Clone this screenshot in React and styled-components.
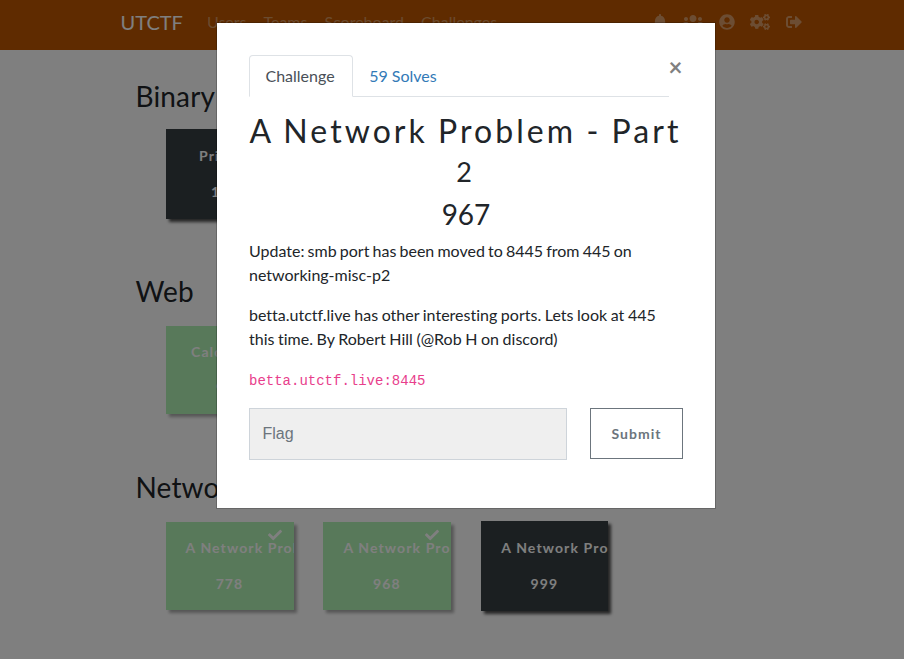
import React from "react";
import styled, { createGlobalStyle } from "styled-components";
import { FaBell, FaUsers, FaUserCircle, FaCogs, FaSignOutAlt, FaCheck } from "react-icons/fa";

const GlobalStyle = createGlobalStyle`
  *, *::before, *::after { box-sizing: border-box; }
  html, body { margin: 0; height: 659px; overflow: hidden; background: #fff; }
  body {
    font-family: Lato, sans-serif;
    font-size: 16px;
    line-height: 1.5;
    font-variant-ligatures: none;
    color: #212529;
  }
`;

const Page = styled.div`
  height: 659px;
  overflow: hidden;
`;

const Navbar = styled.nav`
  height: 50px;
  padding: 0 102px 6px 120.5px;
  display: flex;
  align-items: center;
  background: #bf5700;
`;

const Brand = styled.a`
  width: 78px;
  font-size: 20px;
  line-height: 30px;
  color: #fff;
`;

const NavLinks = styled.div`
  display: flex;
  gap: 17px;
  padding-left: 8.5px;
  flex: 1;
`;

const NavLink = styled.a`
  color: rgba(255, 255, 255, 0.38);
`;

const NavIcons = styled.div`
  display: flex;
  align-items: center;
  gap: 15.7px;
  color: #fff;
  opacity: 0.4;
`;

const IconSlot = styled.span`
  width: ${(p) => p.$w}px;
  flex: none;
  svg { display: block; height: 16px; width: ${(p) => p.$w}px; }
`;

const Board = styled.main`
  padding: 27px 135.5px 0;
`;

const Category = styled.section`
  height: ${(p) => p.$h}px;
`;

const CategoryTitle = styled.h3`
  margin: 0;
  font-size: 28px;
  font-weight: 400;
  line-height: 39px;
  letter-spacing: 0.15px;
  white-space: nowrap;
`;

const CardRow = styled.div`
  display: grid;
  grid-template-columns: repeat(3, 127.6px);
  grid-auto-rows: 90px;
  gap: 29.8px;
  align-items: center;
  padding: ${(p) => p.$top}px 0 0 30.5px;
`;

const Card = styled.button`
  position: relative;
  display: flex;
  flex-direction: column;
  justify-content: flex-start;
  align-items: flex-start;
  height: ${(p) => (p.$solved ? 88 : 90)}px;
  margin: 0;
  border: 0;
  padding: ${(p) => (p.$solved ? 14 : 15)}px 0 0 ${(p) => p.$inset}px;
  overflow: hidden;
  text-align: left;
  white-space: nowrap;
  color: #fff;
  background: ${(p) => (p.$solved ? "#b0f3b4" : "#363e43")};
  box-shadow: 3px 3px 3px ${(p) => (p.$solved ? "rgba(0,0,0,.32)" : "rgba(0,0,0,.7)")};
  font: 700 14px/24px Lato, sans-serif;
  letter-spacing: 1.12px;
`;

const CardName = styled.div`
  flex: none;
`;

const CardPoints = styled.div`
  flex: none;
  width: 127px;
  margin: 12px 0 0 ${(p) => -p.$inset}px;
  text-align: center;
`;

const SolvedMark = styled(FaCheck)`
  position: absolute;
  top: 5.5px;
  right: 11.5px;
  width: 14px;
  height: 14px;
`;

const Backdrop = styled.div`
  position: fixed;
  inset: 0;
  display: flex;
  align-items: flex-start;
  padding: 22px 0 0 216px;
  background: rgba(0, 0, 0, 0.5);
`;

const Modal = styled.div`
  width: 500px;
  height: 487px;
  flex: none;
  padding: 32px 32px 0;
  background: #fff;
  background-clip: padding-box;
  border: 1px solid rgba(0, 0, 0, 0.2);
`;

const ModalTop = styled.div`
  display: flex;
  align-items: flex-start;
`;

const Tabs = styled.div`
  width: 420px;
  height: 42px;
  display: flex;
  border-bottom: 1px solid #dee2e6;
`;

const Tab = styled.div`
  height: 42px;
  padding: 8px ${(p) => (p.$active ? "17px 8px 15.5px" : "16px")};
  border: 1px solid ${(p) => (p.$active ? "#dee2e6" : "transparent")};
  ${(p) => p.$active && "border-bottom-color: #fff; padding: 8px 17px 8px 15.5px;"}
  ${(p) => !p.$active && "padding: 8px 16px 8px 15.5px;"}
  border-radius: 4px 4px 0 0;
  color: ${(p) => (p.$active ? "#495057" : "#337ab7")};
`;

const Close = styled.button`
  margin: 0 0 0 -0.5px;
  padding: 0;
  border: 0;
  background: none;
  font: 700 24px/24px Lato, sans-serif;
  color: #808080;
`;

const Title = styled.h2`
  margin: 13.5px 0 0 -1px;
  font-size: 32px;
  font-weight: 400;
  line-height: 39px;
  letter-spacing: 3.05px;
  word-spacing: -1px;
  text-align: center;
`;

const PartNumber = styled.span`
  font-size: 27px;
  line-height: 1px;
`;

const Value = styled.h3`
  margin: 5px 0 4.5px;
  font-size: 28px;
  font-weight: 400;
  line-height: 41px;
  text-align: center;
`;

const Paragraph = styled.p`
  margin: 0 0 16px;
  line-height: 24px;
  word-spacing: ${(p) => p.$space}px;
`;

const Host = styled.code`
  display: block;
  margin-top: 18px;
  font: 14px/24px "Liberation Mono", monospace;
  color: #e83e8c;
`;

const AnswerRow = styled.div`
  display: flex;
  gap: 23px;
  margin-top: 15px;
`;

const FlagInput = styled.input`
  flex: none;
  width: 318px;
  height: 52px;
  padding: 0 12.5px;
  border: 1px solid #ced4da;
  border-radius: 0;
  background: #efefef;
  font: 16px "Liberation Sans", sans-serif;
  &::placeholder { color: #6c757d; }
`;

const Submit = styled.button`
  flex: none;
  width: 93px;
  height: 51px;
  padding: 0;
  border: 1px solid #6c757d;
  background: #fff;
  color: #6c757d;
  font: 700 14px Lato, sans-serif;
  letter-spacing: 1px;
`;

const categories = [
  { name: "Binary Exploitation", h: 195, top: 13, cards: [{ name: "Printable", points: "1000", inset: 33 }] },
  { name: "Web", h: 196, top: 14, cards: [{ name: "Calculator", points: "998", inset: 25, solved: true }] },
  {
    name: "Networking",
    h: 196,
    top: 14,
    cards: [
      { name: "A Network Problem - Part 1", points: "778", inset: 19.5, solved: true },
      { name: "A Network Problem - Part 2", points: "968", inset: 20, solved: true },
      { name: "A Network Problem - Part 3", points: "999", inset: 20.5 },
    ],
  },
];

function ChallengeCard({ card }) {
  return (
    <Card $solved={card.solved} $inset={card.inset}>
      {card.solved && <SolvedMark />}
      <CardName>{card.name}</CardName>
      <CardPoints $inset={card.inset}>{card.points}</CardPoints>
    </Card>
  );
}

export default function App() {
  return (
    <>
      <GlobalStyle />
      <Page>
        <Navbar>
          <Brand>UTCTF</Brand>
          <NavLinks>
            <NavLink>Users</NavLink>
            <NavLink>Teams</NavLink>
            <NavLink>Scoreboard</NavLink>
            <NavLink>Challenges</NavLink>
          </NavLinks>
          <NavIcons>
            <IconSlot $w={14}><FaBell /></IconSlot>
            <IconSlot $w={20}><FaUsers /></IconSlot>
            <IconSlot $w={16}><FaUserCircle /></IconSlot>
            <IconSlot $w={20}><FaCogs /></IconSlot>
            <IconSlot $w={16}><FaSignOutAlt /></IconSlot>
          </NavIcons>
        </Navbar>
        <Board>
          {categories.map((category) => (
            <Category key={category.name} $h={category.h}>
              <CategoryTitle>{category.name}</CategoryTitle>
              <CardRow $top={category.top}>
                {category.cards.map((card) => (
                  <ChallengeCard key={card.name} card={card} />
                ))}
              </CardRow>
            </Category>
          ))}
        </Board>
      </Page>
      <Backdrop>
        <Modal>
          <ModalTop>
            <Tabs>
              <Tab $active>Challenge</Tab>
              <Tab>59 Solves</Tab>
            </Tabs>
            <Close>×</Close>
          </ModalTop>
          <Title>
            A Network Problem - Part <PartNumber>2</PartNumber>
          </Title>
          <Value>967</Value>
          <Paragraph $space={-0.95}>
            Update: smb port has been moved to 8445 from 445 on networking-misc-p2
          </Paragraph>
          <Paragraph $space={-0.5}>
            betta.utctf.live has other interesting ports. Lets look at 445 this time. By Robert Hill (@Rob H on discord)
          </Paragraph>
          <Host>betta.utctf.live:8445</Host>
          <AnswerRow>
            <FlagInput placeholder="Flag" />
            <Submit>Submit</Submit>
          </AnswerRow>
        </Modal>
      </Backdrop>
    </>
  );
}
